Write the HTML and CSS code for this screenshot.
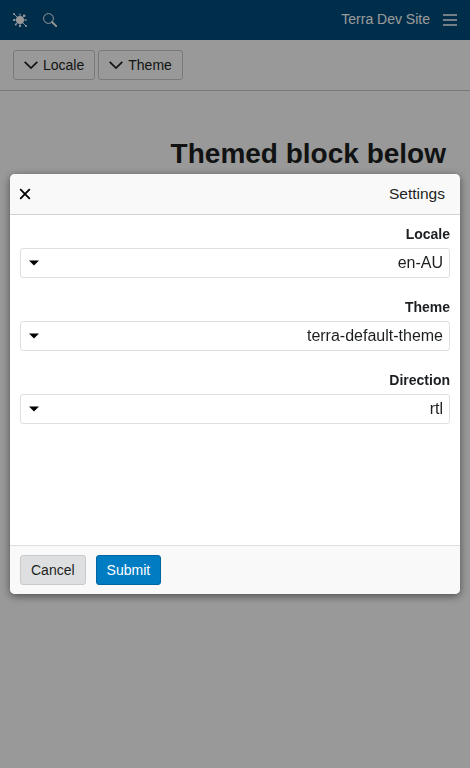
FILE: index.html
```html
<!DOCTYPE html>
<html lang="en-AU" dir="rtl">
<head>
<meta charset="utf-8">
<title>Terra Dev Site</title>
<link rel="stylesheet" href="styles.css">
</head>
<body>
<header class="app-header">
  <svg width="14" height="12" viewBox="0 0 14 12"><path d="M0 1h14M0 6h14M0 11h14" stroke="currentColor" stroke-width="1.5"/></svg>
  <span class="app-title">Terra Dev Site</span>
  <div class="app-tools">
    <svg width="14" height="14" viewBox="0 0 14 14" fill="none" stroke="currentColor"><circle cx="5.5" cy="5.5" r="4.9" stroke-width="1"/><path d="M9 9l4.2 4.2" stroke-width="1.8" stroke-linecap="round"/></svg>
    <svg width="14" height="14" viewBox="0 0 14 14"><circle cx="7" cy="7" r="4" fill="currentColor"/><path d="M7 7V1M7 7v6M7 7H1M7 7h6M7 7L1 1M7 7l4-4M7 7l6 6M7 7l-4 4" stroke="currentColor" stroke-width=".9"/><g fill="currentColor"><circle cx="1" cy="1" r="1"/><circle cx="11.2" cy="2.8" r="1.3"/><circle cx="13" cy="13" r="1"/><circle cx="2.8" cy="11.5" r="1"/><circle cx="7" cy="1" r=".6"/><circle cx="7" cy="13" r="1.1"/><circle cx="1" cy="7" r="1.1"/><circle cx="13" cy="7" r=".8"/></g></svg>
  </div>
</header>
<div class="toolbar" dir="ltr">
  <button class="button"><svg width="14" height="8" viewBox="0 0 14 8"><path d="M.7.8L7 7 13.3.8" fill="none" stroke="currentColor" stroke-width="1.7"/></svg>Locale</button>
  <button class="button"><svg width="14" height="8" viewBox="0 0 14 8"><path d="M.7.8L7 7 13.3.8" fill="none" stroke="currentColor" stroke-width="1.7"/></svg>Theme</button>
</div>
<main><h1>Themed block below</h1></main>
<div class="overlay">
  <section class="modal" role="dialog" aria-label="Settings">
    <header class="modal-header">
      <h2>Settings</h2>
      <svg width="12" height="12" viewBox="0 0 12 12"><path d="M1.2 1.2l9.6 9.6M10.8 1.2L1.2 10.8" stroke="#000" stroke-width="1.8"/></svg>
    </header>
    <div class="modal-body">
      <div class="field"><label>Locale</label><div class="select"><span>en-AU</span><svg width="10" height="6" viewBox="0 0 10 6"><path d="M0 .5h10L5 5.5z"/></svg></div></div>
      <div class="field"><label>Theme</label><div class="select"><span>terra-default-theme</span><svg width="10" height="6" viewBox="0 0 10 6"><path d="M0 .5h10L5 5.5z"/></svg></div></div>
      <div class="field"><label>Direction</label><div class="select"><span>rtl</span><svg width="10" height="6" viewBox="0 0 10 6"><path d="M0 .5h10L5 5.5z"/></svg></div></div>
    </div>
    <footer class="modal-footer" dir="ltr">
      <button class="button cancel">Cancel</button>
      <button class="button submit">Submit</button>
    </footer>
  </section>
</div>
</body>
</html>
```
FILE: styles.css
```css
* { box-sizing: border-box; }
body {
  margin: 0;
  height: 100vh;
  overflow: hidden;
  background: #fff;
  color: #1c1f21;
  font: 14px/20px "Liberation Sans", Arial, sans-serif;
}
svg { display: block; flex: none; }
.app-header {
  display: flex;
  align-items: center;
  height: 40px;
  padding: 0 13px;
  background: #004b7c;
  color: #fff;
}
.app-title { margin: 0 13px 2px 0; }
.app-tools { display: flex; gap: 16px; margin-right: auto; }
.toolbar {
  display: flex;
  gap: 3px;
  height: 51px;
  padding: 10px 13px;
  border-bottom: 1px solid #c8cacb;
}
.button {
  display: flex;
  align-items: center;
  gap: 5px;
  height: 30px;
  padding: 0 10px;
  border: 1px solid #c8cacb;
  border-radius: 3px;
  background: transparent;
  color: #1c1f21;
  font: inherit;
}
main { padding: 46px 24px; }
h1 { margin: 0; font-size: 28px; line-height: 34px; }
.overlay {
  position: fixed;
  inset: 0;
  display: flex;
  align-items: center;
  justify-content: center;
  background: rgba(0, 0, 0, .4);
}
.modal {
  display: flex;
  flex-direction: column;
  width: 450px;
  height: 420px;
  overflow: hidden;
  border-radius: 5px;
  background: #fff;
  box-shadow: 0 2px 8px rgba(0, 0, 0, .5);
}
.modal-header {
  display: flex;
  align-items: center;
  justify-content: space-between;
  height: 41px;
  padding: 0 15px 0 9px;
  border-bottom: 1px solid #d0d2d3;
  background: #f9f9f9;
}
h2 { margin: 0; font-size: 15.5px; font-weight: 400; }
.modal-body { flex: 1; padding: 9px 10px; }
.field { margin-bottom: 19px; }
label { display: block; margin-bottom: 4px; font-weight: 700; }
.select {
  display: flex;
  align-items: center;
  justify-content: space-between;
  height: 30px;
  padding: 0 6px 0 8px;
  border: 1px solid #dedfe0;
  border-radius: 3px;
  font-size: 16px;
}
.modal-footer {
  display: flex;
  gap: 10px;
  height: 49px;
  padding: 9px 10px;
  border-top: 1px solid #dedfe0;
  background: #f9f9f9;
}
.cancel { background: #dedfe0; }
.submit { border-color: #0065a3; background: #007cc3; color: #fff; }
```
